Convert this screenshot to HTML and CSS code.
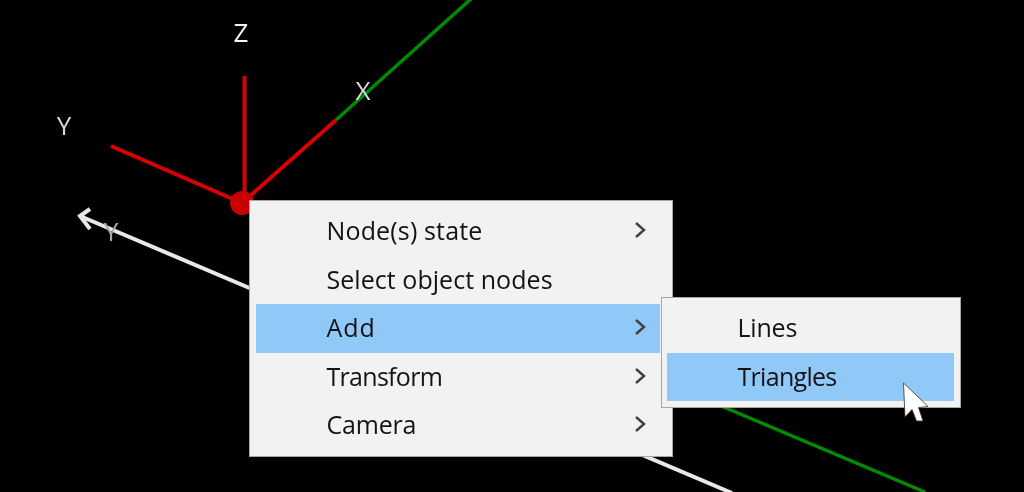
FILE: index.html
```html
<!DOCTYPE html>
<html lang="en">
<head>
<meta charset="utf-8">
<title>Context menu</title>
<link rel="stylesheet" href="styles.css">
</head>
<body>
<main class="viewport">
  <svg class="scene" viewBox="0 0 1024 492" width="1024" height="492">
    <line class="axis-green" x1="336" y1="120" x2="472" y2="-2"/>
    <line class="axis-green" x1="700" y1="397" x2="925" y2="492"/>
    <path class="axis-white" d="M80 216 L732 493 M90 209 L80 216 L90 229"/>
    <line class="axis-red" x1="244.500" y1="76" x2="244.500" y2="203"/>
    <line class="axis-red" x1="111" y1="146" x2="242" y2="203"/>
    <line class="axis-red" x1="336" y1="120" x2="242" y2="203"/>
    <circle class="node" cx="242" cy="203" r="12"/>
    <text class="label" x="241" y="42">Z</text>
    <text class="label dim" x="64" y="135">Y</text>
    <text class="label dim" x="363" y="100">X</text>
    <text class="label faint" x="111" y="241">Y</text>
  </svg>

  <div class="menu">
    <div class="item"><span class="loose">Node(s) state</span><svg class="chev" viewBox="0 0 12 16"><path d="M2 1 L10 8 L2 15"/></svg></div>
    <div class="item"><span class="slight">Select object nodes</span></div>
    <div class="item active"><span class="wider">Add</span><svg class="chev" viewBox="0 0 12 16"><path d="M2 1 L10 8 L2 15"/></svg></div>
    <div class="item"><span class="tight">Transform</span><svg class="chev" viewBox="0 0 12 16"><path d="M2 1 L10 8 L2 15"/></svg></div>
    <div class="item"><span class="snug">Camera</span><svg class="chev" viewBox="0 0 12 16"><path d="M2 1 L10 8 L2 15"/></svg></div>
  </div>

  <div class="menu submenu">
    <div class="item"><span class="snug">Lines</span></div>
    <div class="item active"><span class="tight">Triangles</span></div>
  </div>

  <svg class="cursor" viewBox="0 0 30 42" width="30" height="42">
    <path d="M2.500 1 L4 35 L11 27.500 L15.500 39 L22 39 L17.500 25.500 L27 24.500 Z"/>
  </svg>
</main>
</body>
</html>
```

FILE: styles.css
```css
html, body {
  margin: 0;
  padding: 0;
  background: #000;
}

.viewport {
  position: relative;
  width: 1024px;
  height: 492px;
  overflow: hidden;
  background: #000;
  font-family: "Open Sans", "Noto Sans", sans-serif;
  filter: blur(0.6px);
}

.scene {
  position: absolute;
  left: 0;
  top: 0;
}

.axis-green {
  stroke: #008a00;
  stroke-width: 3.5;
}

.axis-red {
  stroke: #d80000;
  stroke-width: 4;
}

.axis-white {
  fill: none;
  stroke: #e8e8e8;
  stroke-width: 4;
}

.node {
  fill: #c80000;
}

.label {
  fill: #f8f8f8;
  font-size: 26px;
  text-anchor: middle;
}

.label.dim {
  fill: #d8d8d8;
}

.label.faint {
  fill: #a8a8a8;
}

.menu {
  position: absolute;
  left: 249px;
  top: 200px;
  width: 424px;
  box-sizing: border-box;
  padding: 6px 12px 6px 5.500px;
  background: #f2f2f2;
  border: 1.500px solid #a6a6a6;
}

.submenu {
  left: 661px;
  top: 297px;
  width: 300px;
  padding: 6px 6px 5.500px 4.500px;
}

.item {
  display: flex;
  align-items: center;
  justify-content: space-between;
  height: 48.500px;
  padding: 0 14px 2px 71px;
  box-sizing: border-box;
  color: #141414;
  font-size: 25px;
}

.item .loose {
  letter-spacing: 0.15px;
}

.item .slight {
  letter-spacing: 0.05px;
}

.item .wider {
  letter-spacing: 1px;
}

.item .tight {
  letter-spacing: -0.7px;
}

.item .snug {
  letter-spacing: -0.2px;
}

.item.active {
  background: #90c8f7;
}

.chev {
  width: 12px;
  height: 16px;
  fill: none;
  stroke: #404040;
  stroke-width: 2.400;
}

.cursor {
  position: absolute;
  left: 901px;
  top: 382px;
  fill: #fff;
  stroke: #333;
  stroke-width: 0.800;
}
```
